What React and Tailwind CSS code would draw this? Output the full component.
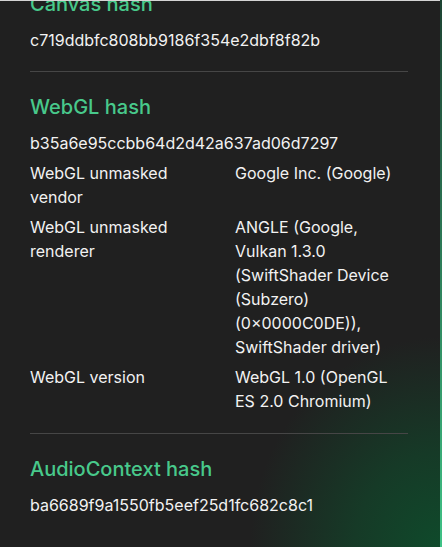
import React from 'react';

const sections = [
  {
    title: 'Canvas hash',
    hash: 'c719ddbfc808bb9186f354e2dbf8f82b',
  },
  {
    title: 'WebGL hash',
    hash: 'b35a6e95ccbb64d2d42a637ad06d7297',
    rows: [
      ['WebGL unmasked vendor', 'Google Inc. (Google)'],
      [
        'WebGL unmasked renderer',
        'ANGLE (Google, Vulkan 1.3.0 (SwiftShader Device (Subzero) (0×0000C0DE)), SwiftShader driver)',
      ],
      ['WebGL version', 'WebGL 1.0 (OpenGL ES 2.0 Chromium)'],
    ],
  },
  {
    title: 'AudioContext hash',
    hash: 'ba6689f9a1550fb5eef25d1fc682c8c1',
  },
];

const App = () => {
  return (
    <div
      className="h-[547px] w-[442px] overflow-hidden bg-gradient-to-b from-[#1d4433] to-[#3fc286]"
      style={{ fontFamily: 'Inter, "Noto Sans", sans-serif' }}
    >
      <div className="relative h-full w-[440px] overflow-hidden bg-[#202020] bg-[radial-gradient(ellipse_190px_210px_at_100%_100%,#0f4a2b_0%,#163a27_45%,#202020_100%)]">
        <div className="absolute left-0 right-0 top-0 h-px bg-[#d4d4d4]" />
        <div className="-mt-[10px] pl-[30px] pr-[32px]">
          {sections.map((s, i) => (
            <div key={s.title}>
              {i > 0 && <div className="mb-[21px] h-px bg-[#464646]" />}
              <div className={i === 0 ? 'pb-[19px]' : s.rows ? 'pb-[20px]' : ''}>
                <h2 className="text-[20px] font-medium leading-7 text-[#48c98b]">{s.title}</h2>
                <p className="mt-[10px] text-[16px] leading-6 text-[#f2f2f2]">{s.hash}</p>
                {s.rows && (
                  <div className="mt-[6px] flex flex-col gap-[6px]">
                    {s.rows.map(([label, value]) => (
                      <div key={label} className="flex gap-4 text-[16px] leading-6 text-[#f2f2f2]">
                        <div className="w-[189px] shrink-0 pr-4">{label}</div>
                        <div className="flex-1">{value}</div>
                      </div>
                    ))}
                  </div>
                )}
              </div>
            </div>
          ))}
        </div>
      </div>
    </div>
  );
};

export default App;
